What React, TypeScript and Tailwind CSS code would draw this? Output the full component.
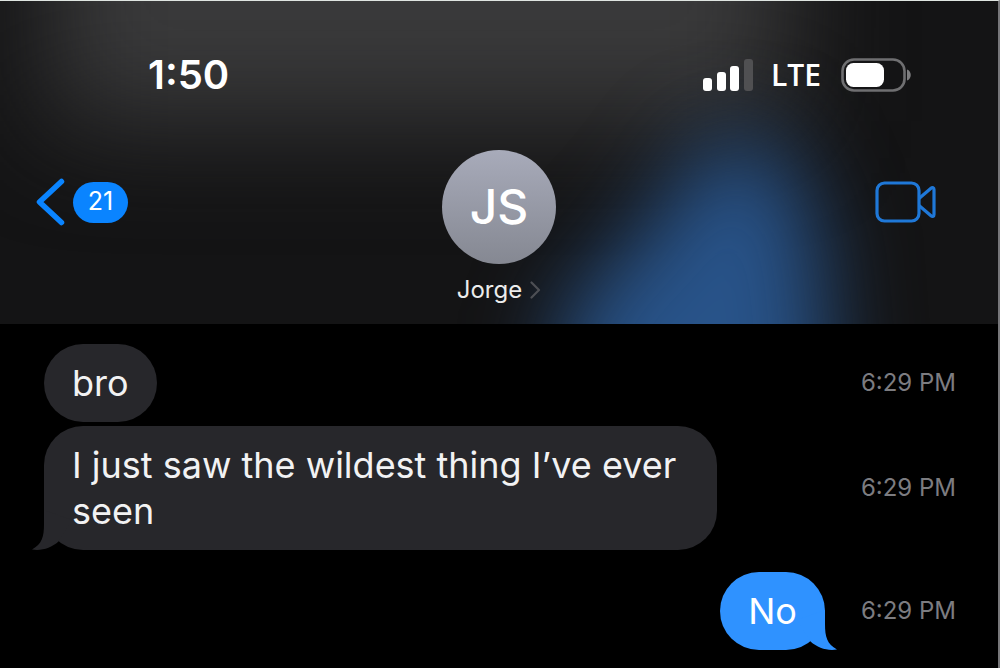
interface Message {
  id: number;
  text: string;
  time: string;
  mine: boolean;
  tail: boolean;
}

const messages: Message[] = [
  { id: 1, text: "bro", time: "6:29 PM", mine: false, tail: false },
  {
    id: 2,
    text: "I just saw the wildest thing I’ve ever seen",
    time: "6:29 PM",
    mine: false,
    tail: true,
  },
  { id: 3, text: "No", time: "6:29 PM", mine: true, tail: true },
];

function StatusBar() {
  return (
    <div className="flex h-14 items-center justify-between pl-[148px] pr-[87px] text-white">
      <span className="text-[40px] leading-14 font-semibold">1:50</span>
      <div className="flex items-center">
        <svg className="h-8 w-[50px]" viewBox="0 0 50 32" aria-label="Signal">
          <rect x="0" y="19" width="9" height="13" rx="3" fill="#fff" />
          <rect x="14" y="13" width="9" height="19" rx="3" fill="#fff" />
          <rect x="27" y="7" width="9" height="25" rx="3" fill="#fff" />
          <rect x="41" y="0" width="9" height="32" rx="3" fill="#505052" />
        </svg>
        <span className="ml-[18px] mr-5 font-['Open_Sans',sans-serif] text-[30px] leading-8 font-semibold">
          LTE
        </span>
        <svg className="h-[34px] w-[70px]" viewBox="0 0 70 34" aria-label="Battery">
          <rect
            x="1.5"
            y="1.5"
            width="62"
            height="31"
            rx="11.5"
            fill="none"
            stroke="#6f6f71"
            strokeWidth="2.6"
          />
          <rect x="5" y="5" width="38" height="24" rx="7.5" fill="#fff" />
          <path d="M66 11.500c5 1.500 5 9.500 0 11z" fill="#7d7d7f" />
        </svg>
      </div>
    </div>
  );
}

function NavBar() {
  return (
    <div className="grid grid-cols-[1fr_auto_1fr] px-9">
      <button
        type="button"
        aria-label="Back, 21 unread"
        className="mt-7 flex h-12 items-center gap-2 self-start justify-self-start"
      >
        <svg className="h-12 w-[29px]" viewBox="0 0 29 48" fill="none">
          <path
            d="M25.500 3.500 3.500 24l22 20.500"
            stroke="#0a84ff"
            strokeWidth="5.500"
            strokeLinecap="round"
            strokeLinejoin="round"
          />
        </svg>
        <span className="flex h-[41px] w-[55px] items-center justify-center rounded-full bg-[#0a84ff] text-[25px] text-white">
          21
        </span>
      </button>

      <button type="button" className="flex flex-col items-center">
        <span className="flex size-[114px] items-center justify-center rounded-full bg-linear-to-b from-[#a8abba] to-[#858892] text-[48px] font-medium text-white">
          JS
        </span>
        <span className="mt-2 flex items-center gap-2 text-[24px] leading-9 text-[#ececec]">
          Jorge
          <svg className="h-[18px] w-[11px]" viewBox="0 0 11 18" fill="none">
            <path
              d="M1.500 1.500 9 9l-7.500 7.500"
              stroke="#4d4f54"
              strokeWidth="2.200"
              strokeLinecap="round"
              strokeLinejoin="round"
            />
          </svg>
        </span>
      </button>

      <button
        type="button"
        aria-label="Video call"
        className="mt-[31px] mr-[26px] self-start justify-self-end"
      >
        <svg className="h-[42px] w-[61px]" viewBox="0 0 61 42" fill="none">
          <g stroke="#1f78d8" strokeWidth="3.200" strokeLinejoin="round">
            <rect x="2" y="2" width="42" height="38" rx="7.500" />
            <path d="M44 17.500 56 7.200c1.500-1.300 3-.7 3 1.300v25c0 2-1.500 2.600-3 1.300L44 24.500" />
          </g>
        </svg>
      </button>
    </div>
  );
}

function Tail({ mine }: { mine: boolean }) {
  return (
    <svg
      className={
        mine
          ? "absolute -right-3 bottom-0 h-10 w-10 -scale-x-100 fill-[#2f92ff]"
          : "absolute -left-3 bottom-0 h-10 w-10 fill-[#27272b]"
      }
      viewBox="0 0 40 40"
      aria-hidden="true"
    >
      <path d="M12 0v14c0 13-2 20-12 25.500 10 1.500 19-1.500 26.500-8L40 10z" />
    </svg>
  );
}

function MessageRow({ message }: { message: Message }) {
  const { text, time, mine, tail } = message;

  return (
    <li
      className={
        mine
          ? "mt-[18px] flex items-center justify-end gap-9"
          : "flex items-center justify-between gap-9"
      }
    >
      <div
        className={
          mine
            ? "relative max-w-[673px] rounded-[39px] bg-[#2f92ff] px-7 py-4 text-white"
            : "relative max-w-[673px] rounded-[39px] bg-[#27272b] px-7 py-4 text-[#f2f2f3]"
        }
      >
        <p className="text-[36px] leading-[46px]">{text}</p>
        {tail && <Tail mine={mine} />}
      </div>
      <time className="shrink-0 text-[24px] text-[#7c7c80]">{time}</time>
    </li>
  );
}

export default function App() {
  return (
    <div className="min-h-screen border-t border-r-2 border-t-[#dfe5e1] border-r-[#77777a] bg-black font-['Inter',sans-serif]">
      <header className="relative overflow-hidden bg-[#141415] pt-[46px] pb-4">
        <div className="absolute -top-40 left-[5%] h-[280px] w-[74%] bg-[#3a3a3b] blur-[56px]" />
        <div className="absolute top-[140px] left-[54%] h-[340px] w-[31%] blur-[44px]">
          <div className="size-full bg-[#285389] [clip-path:polygon(56%_0%,76%_0%,90%_26%,96%_100%,4%_100%,8%_50%,36%_24%)]" />
        </div>
        <div className="relative">
          <StatusBar />
          <div className="pt-[47px]">
            <NavBar />
          </div>
        </div>
      </header>

      <main className="pt-5 pr-[42px] pb-4 pl-11">
        <ul className="flex flex-col gap-1">
          {messages.map((message) => (
            <MessageRow key={message.id} message={message} />
          ))}
        </ul>
      </main>
    </div>
  );
}
